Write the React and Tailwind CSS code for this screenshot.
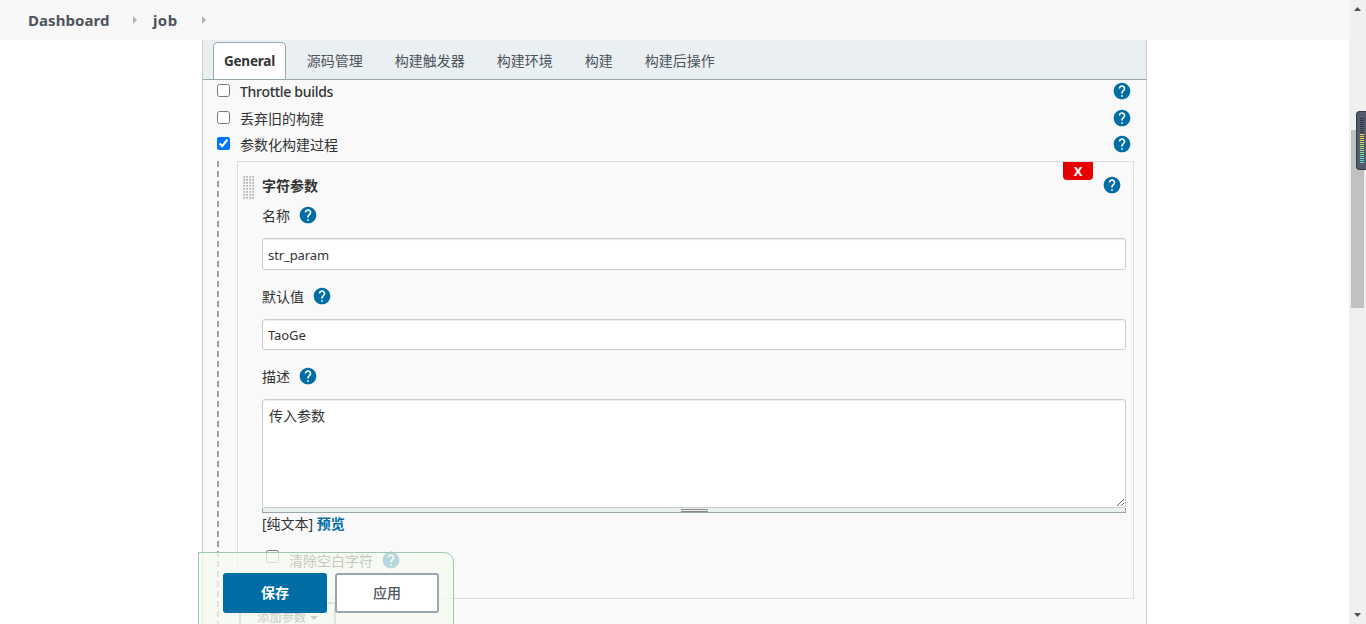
import React from 'react'

const tabs = ['源码管理', '构建触发器', '构建环境', '构建', '构建后操作']

function HelpIcon({ className = '' }) {
  return (
    <svg viewBox="0 0 24 24" className={`size-5 shrink-0 ${className}`}>
      <circle cx="12" cy="12" r="9" fill="#fff" />
      <path
        fill="#006da4"
        d="M12 2C6.48 2 2 6.48 2 12s4.48 10 10 10 10-4.48 10-10S17.52 2 12 2zm1 17h-2v-2h2v2zm2.07-7.75l-.9.92C13.45 12.9 13 13.5 13 15h-2v-.5c0-1.1.45-2.1 1.17-2.83l1.24-1.26c.37-.36.59-.86.59-1.41 0-1.1-.9-2-2-2s-2 .9-2 2H8c0-2.21 1.79-4 4-4s4 1.79 4 4c0 .88-.36 1.68-.93 2.25z"
      />
    </svg>
  )
}

function Crumb({ children, className }) {
  return (
    <li className="flex items-center">
      <span className={className}>{children}</span>
      <svg viewBox="0 0 4 8" className="h-2 w-1">
        <path d="M0 0l4 4-4 4z" fill="#b3b3b3" />
      </svg>
    </li>
  )
}

function OptionRow({ label, checked, className }) {
  return (
    <section className={`flex items-center justify-between px-3.5 ${className}`}>
      <label className="flex items-center">
        <input type="checkbox" defaultChecked={checked} className="size-[13px] shrink-0" />
        <span className="ml-2.5 pt-[3px] leading-5">{label}</span>
      </label>
      <HelpIcon className="-mb-px" />
    </section>
  )
}

function FieldLabel({ children, className = '' }) {
  return (
    <section className={`flex h-5 items-center ${className}`}>
      <span className="leading-5">{children}</span>
      <HelpIcon className="ml-2 -mt-0.5" />
    </section>
  )
}

function Scrollbar() {
  return (
    <aside className="relative flex w-[17px] shrink-0 flex-col items-center justify-between bg-[#f0f0f0]">
      <svg viewBox="0 0 7 4" className="mt-[7px] h-1 w-[7px]">
        <path d="M0 4L3.5 0 7 4z" fill="#505050" />
      </svg>
      <section className="absolute left-0.5 top-[130px] h-[178px] w-[13px] bg-[#c1c1c1]" />
      {/* level meter docked on the window edge */}
      <section className="absolute right-0 top-[111px] flex h-[59px] w-2.5 flex-col gap-px rounded-l border border-r-0 border-[#343844] bg-[#545b6c] pl-[3px] pt-1.5">
        {meter.map((color, i) => (
          <i key={i} className={`h-px w-1 shrink-0 ${color}`} />
        ))}
      </section>
      <svg viewBox="0 0 7 4" className="mb-[7px] h-1 w-[7px]">
        <path d="M0 0h7L3.5 4z" fill="#505050" />
      </svg>
    </aside>
  )
}

const meter = [
  ...Array(8).fill('bg-[#343946]'),
  ...Array(2).fill('bg-[#f2ce45]'),
  ...Array(3).fill('bg-[#d9dc52]'),
  ...Array(3).fill('bg-[#abdd68]'),
  ...Array(3).fill('bg-[#7fe09a]'),
  ...Array(4).fill('bg-[#53e0c4]'),
]

export default function App() {
  return (
    <main className="flex h-[624px] w-[1366px] overflow-hidden bg-white font-['Noto_Sans','Noto_Sans_CJK_SC',sans-serif] text-sm text-[#333]">
      <section className="relative flex w-[1349px] shrink-0 flex-col overflow-hidden">
        <ul className="flex h-10 shrink-0 items-center bg-[#f8f8f8] pl-7 text-[15px] font-bold text-[#4d545d]">
          <Crumb className="w-[105px] pt-px tracking-[0.05px]">Dashboard</Crumb>
          <Crumb className="ml-4 w-[49px] pt-px tracking-[0.4px]">job</Crumb>
        </ul>

        <section className="ml-[202px] flex w-[945px] grow flex-col border-x border-[#ccc] bg-[#f9f9f9]">
          <nav className="flex h-10 shrink-0 items-end border-b border-[#98a6ad] bg-[#eaeff2] pl-2.5 text-[#4d545d]">
            <span className="flex h-[37px] w-[73px] items-center justify-center rounded-t-[5px] border border-b-0 border-[#98a6ad] bg-white pt-0.5 text-[13.5px] font-bold tracking-[-0.2px] text-[#333]">
              General
            </span>
            <section className="flex h-[37px] items-center gap-8 pl-[20.75px]">
              {tabs.map((tab) => (
                <span key={tab}>{tab}</span>
              ))}
            </section>
          </nav>

          <OptionRow label={<b className="font-medium tracking-[-0.3px]">Throttle builds</b>} className="h-[21px]" />
          <OptionRow label="丢弃旧的构建" className="mt-[3px] h-[27px]" />
          <OptionRow label="参数化构建过程" checked className="h-[25px]" />

          <section className="mt-[5px] flex grow pl-3.5">
            <section className="w-0.5 shrink-0 bg-[repeating-linear-gradient(to_bottom,#a0a0a0_0,#a0a0a0_6px,transparent_6px,transparent_10px)]" />
            <section className="ml-[18px] w-[897px] shrink-0">
              <section className="relative h-[438px] border border-[#ddd] pl-6 pr-[7px] pt-3.5">
                <svg className="absolute left-[5px] top-[14px] h-6 w-3">
                  <defs>
                    <pattern id="grip" width="3" height="3" patternUnits="userSpaceOnUse">
                      <rect width="2" height="2" fill="#ccc" />
                      <rect x="1" width="1" height="1" fill="#aaa" />
                    </pattern>
                  </defs>
                  <rect width="12" height="24" fill="url(#grip)" />
                </svg>
                <button className="absolute right-10 top-0 h-[18px] w-[30px] rounded-b bg-[#e60000] text-[13px] font-bold leading-[18px] text-white">
                  X
                </button>

                <section className="flex h-5 items-center justify-between pr-1">
                  <b className="leading-5">字符参数</b>
                  <HelpIcon className="-mt-0.5" />
                </section>

                <FieldLabel className="mt-2.5">名称</FieldLabel>
                <input
                  defaultValue="str_param"
                  className="mt-3 block h-8 w-full rounded-[3px] border border-[#ccc] bg-white px-[5px] pt-0.5 text-[13px] tracking-[-0.1px] shadow-[inset_0_1px_1px_rgba(0,0,0,0.075)]"
                />

                <FieldLabel className="mt-[17px]">默认值</FieldLabel>
                <input
                  defaultValue="TaoGe"
                  className="mt-3 block h-[31px] w-full rounded-[3px] border border-[#ccc] bg-white px-[5px] pt-px text-[13px] tracking-[-0.1px] shadow-[inset_0_1px_1px_rgba(0,0,0,0.075)]"
                />

                <FieldLabel className="mt-[17px]">描述</FieldLabel>
                <textarea
                  defaultValue="传入参数"
                  className="mt-3 block h-[109px] w-full resize rounded-[3px] border border-[#ccc] bg-white px-1.5 pt-1.5 leading-5 shadow-[inset_0_1px_1px_rgba(0,0,0,0.075)]"
                />
                <section className="flex h-[5px] justify-center border border-t-0 border-[#98a6ad] bg-[#eaeff2]">
                  <i className="mt-px h-[3px] w-[27px] border-y border-[#888]" />
                </section>

                <p className="mt-px leading-5">
                  [纯文本] <b className="text-[#006da4]">预览</b>
                </p>

                <section className="mt-[13px] flex items-center pl-1">
                  <input type="checkbox" className="-mt-1.5 size-[13px]" />
                  <span className="ml-2.5 pt-1 leading-5">清除空白字符</span>
                  <HelpIcon className="ml-2 mt-0.5" />
                </section>
              </section>

              <button className="ml-0.5 mt-[3px] flex h-8 w-[97px] items-center justify-center gap-1 border-2 border-[#98a6ad] text-[12.3px] leading-4 font-medium text-[#4d545d]">
                添加参数
                <svg viewBox="0 0 8 4" className="h-1 w-2">
                  <path d="M0 0h8L4 4z" fill="#4d545d" />
                </svg>
              </button>
            </section>
          </section>
        </section>

        {/* sticky save bar */}
        <section className="absolute left-[198px] top-[552px] flex h-24 w-64 gap-2 rounded-tr-[10px] border border-[#9cc9b0] bg-[rgba(245,249,239,0.75)] pl-6 pt-5 font-bold">
          <button className="h-10 w-[104px] rounded-[3px] bg-[#006da4] text-white">保存</button>
          <button className="h-10 w-[104px] rounded-[3px] border-2 border-[#98a6ad] bg-white font-medium text-[#4d545d]">
            应用
          </button>
        </section>
      </section>

      <Scrollbar />
    </main>
  )
}
